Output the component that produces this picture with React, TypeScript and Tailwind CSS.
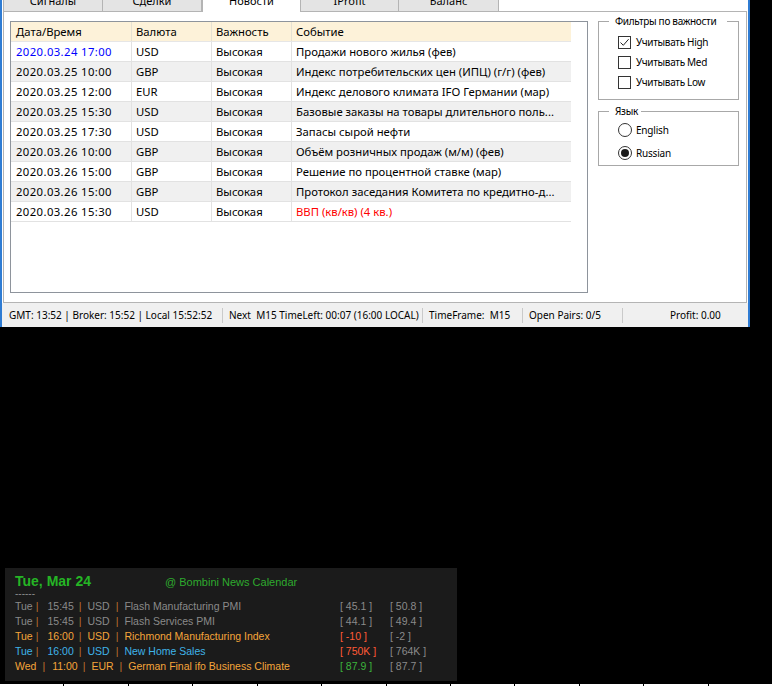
import React from 'react';

type NewsRow = { d: string; c: string; e: string; dc?: string; ec?: string };

const rows: NewsRow[] = [
  { d: '2020.03.24 17:00', c: 'USD', e: 'Продажи нового жилья (фев)', dc: 'text-[#0000ff]' },
  { d: '2020.03.25 10:00', c: 'GBP', e: 'Индекс потребительских цен (ИПЦ) (г/г) (фев)' },
  { d: '2020.03.25 12:00', c: 'EUR', e: 'Индекс делового климата IFO Германии (мар)' },
  { d: '2020.03.25 15:30', c: 'USD', e: 'Базовые заказы на товары длительного поль...' },
  { d: '2020.03.25 17:30', c: 'USD', e: 'Запасы сырой нефти' },
  { d: '2020.03.26 10:00', c: 'GBP', e: 'Объём розничных продаж (м/м) (фев)' },
  { d: '2020.03.26 15:00', c: 'GBP', e: 'Решение по процентной ставке (мар)' },
  { d: '2020.03.26 15:00', c: 'GBP', e: 'Протокол заседания Комитета по кредитно-д...' },
  { d: '2020.03.26 15:30', c: 'USD', e: 'ВВП (кв/кв) (4 кв.)', ec: 'text-[#ff0000]' },
];

type CalRow = {
  day: string; time: string; cur: string; name: string;
  color: string; actual: string; actualColor: string; prev: string;
  p1: string;
};

const calendar: CalRow[] = [
  { day: 'Tue', time: '15:45', cur: 'USD', name: 'Flash Manufacturing PMI', color: 'text-[#8a8a8a]', actual: '[ 45.1 ]', actualColor: 'text-[#8a8a8a]', prev: '[ 50.8 ]', p1: 'ml-[3px] mr-[9px]' },
  { day: 'Tue', time: '15:45', cur: 'USD', name: 'Flash Services PMI', color: 'text-[#8a8a8a]', actual: '[ 44.1 ]', actualColor: 'text-[#8a8a8a]', prev: '[ 49.4 ]', p1: 'ml-[3px] mr-[9px]' },
  { day: 'Tue', time: '16:00', cur: 'USD', name: 'Richmond Manufacturing Index', color: 'text-[#f5a53a]', actual: '[ -10 ]', actualColor: 'text-[#ff5a36]', prev: '[ -2 ]', p1: 'ml-[3px] mr-[9px]' },
  { day: 'Tue', time: '16:00', cur: 'USD', name: 'New Home Sales', color: 'text-[#3fb3e8]', actual: '[ 750K ]', actualColor: 'text-[#ff5a36]', prev: '[ 764K ]', p1: 'ml-[3px] mr-[9px]' },
  { day: 'Wed', time: '11:00', cur: 'EUR', name: 'German Final ifo Business Climate', color: 'text-[#f5a53a]', actual: '[ 87.9 ]', actualColor: 'text-[#3cb43c]', prev: '[ 87.7 ]', p1: 'ml-[6px] mr-[7px]' },
];

const tabs = [
  { label: 'Сигналы', w: 'w-[100px]' },
  { label: 'Сделки', w: 'w-[99px]' },
  { label: 'Новости', w: 'w-[99px]', active: true },
  { label: 'IProfit', w: 'w-[98px]' },
  { label: 'Баланс', w: 'w-[100px]' },
];

const Pipe: React.FC<{ cls: string }> = ({ cls }) => (
  <span className={`text-[#c0712e] ${cls}`}>|</span>
);

const CheckBox: React.FC<{ checked?: boolean; label: string }> = ({ checked, label }) => (
  <div className="flex items-center h-[13px]">
    <div className="w-[13px] h-[13px] border border-[#333333] bg-white flex items-center justify-center">
      {checked && (
        <svg width="11" height="11" viewBox="0 0 11 11">
          <path d="M1.5 5.5 L4.3 8.3 L9.6 2.2" fill="none" stroke="#222" strokeWidth="1" />
        </svg>
      )}
    </div>
    <span className="ml-[5px] text-[10px] tracking-[-0.3px] leading-[13px] whitespace-nowrap">{label}</span>
  </div>
);

const Radio: React.FC<{ checked?: boolean; label: string }> = ({ checked, label }) => (
  <div className="flex items-center h-[14px]">
    <div className="w-[14px] h-[14px] rounded-full border border-[#333333] bg-white flex items-center justify-center">
      {checked && <div className="w-[8px] h-[8px] rounded-full bg-[#1a1a1a]" />}
    </div>
    <span className="ml-[4px] text-[10px] tracking-[-0.2px] leading-[14px] whitespace-nowrap">{label}</span>
  </div>
);

export default function App() {
  return (
    <div className="w-[772px] h-[686px] bg-black flex flex-col overflow-hidden font-['Noto_Sans',sans-serif]">
      {/* window */}
      <div className="w-[750px] h-[327px] bg-white border-l-2 border-r-2 border-[#2f7cd3] flex flex-col text-black">
        {/* tab strip, cut off at top */}
        <div className="h-[11px] flex pl-[1px]">
          {tabs.map((t) =>
            t.active ? (
              <div key={t.label} className={`${t.w} h-[12px] bg-white border-l border-r border-[#b4b4b4] overflow-hidden flex justify-center relative z-10`}>
                <span className="text-[11px] leading-[15px] -mt-[7px]">{t.label}</span>
              </div>
            ) : (
              <div key={t.label} className={`${t.w} h-[11px] bg-[#e4e4e4] border-r border-[#b4b4b4] first:border-l overflow-hidden flex justify-center`}>
                <span className="text-[11px] leading-[15px] -mt-[7px]">{t.label}</span>
              </div>
            )
          )}
        </div>

        {/* tab page */}
        <div className="mx-[1px] h-[292px] border border-[#b4b4b4] flex pl-[6px] pt-[9px]">
          {/* list view */}
          <div className="w-[578px] h-[272px] border border-[#8e949c] text-[11.3px]">
            <div className="w-[560px] h-[20px] flex bg-[#fdf2d9] border-b border-[#e6e6e6]">
              <div className="w-[121px] border-r border-[#e6e1d2] pl-[5px] leading-[19px]">Дата/Время</div>
              <div className="w-[80px] border-r border-[#e6e1d2] pl-[4px] leading-[19px]">Валюта</div>
              <div className="w-[80px] border-r border-[#e6e1d2] pl-[4px] leading-[19px]">Важность</div>
              <div className="w-[279px] pl-[4px] leading-[19px]">Событие</div>
            </div>
            {rows.map((r, i) => (
              <div
                key={i}
                className={`w-[560px] h-[20px] flex border-b border-[#e2e2e2] ${i % 2 === 1 ? 'bg-[#f0f0f0]' : 'bg-white'}`}
              >
                <div className={`w-[121px] border-r border-[#e2e2e2] pl-[5px] leading-[19px] tracking-[0.4px] ${r.dc ?? ''}`}>{r.d}</div>
                <div className="w-[80px] border-r border-[#e2e2e2] pl-[4px] leading-[19px]">{r.c}</div>
                <div className="w-[80px] border-r border-[#e2e2e2] pl-[4px] leading-[19px]">Высокая</div>
                <div className={`w-[279px] pl-[4px] leading-[19px] whitespace-nowrap overflow-hidden ${r.ec ?? ''}`}>{r.e}</div>
              </div>
            ))}
          </div>

          {/* right side group boxes */}
          <div className="ml-[10px] w-[141px] flex flex-col -mt-[6px]">
            <fieldset className="border border-[#a8a8a8] h-[85px]">
              <legend className="ml-[10px] pl-[6px] pr-[11px] text-[10px] tracking-[-0.3px] leading-[12px] whitespace-nowrap">Фильтры по важности</legend>
              <div className="flex flex-col gap-[7px] mt-[9px] pl-[19px]">
                <CheckBox checked label="Учитывать High" />
                <CheckBox label="Учитывать Med" />
                <CheckBox label="Учитывать Low" />
              </div>
            </fieldset>
            <fieldset className="mt-[5px] border border-[#a8a8a8] h-[61px]">
              <legend className="ml-[10px] pl-[6px] pr-[3px] text-[10px] tracking-[-0.3px] leading-[12px] whitespace-nowrap">Язык</legend>
              <div className="flex flex-col gap-[9px] mt-[6px] pl-[19px]">
                <Radio label="English" />
                <Radio checked label="Russian" />
              </div>
            </fieldset>
          </div>
        </div>

        {/* status bar */}
        <div className="flex-1 bg-[#f0f0f0] flex items-center text-[10px] whitespace-nowrap">
          <div className="w-[220px] pl-[7px]">GMT: 13:52 | Broker: 15:52 | Local 15:52:52</div>
          <div className="w-px h-[15px] bg-[#cacaca]" />
          <div className="w-[199px] pl-[6px]">Next&nbsp; M15 TimeLeft: 00:07 (16:00 LOCAL)</div>
          <div className="w-px h-[15px] bg-[#cacaca]" />
          <div className="w-[99px] pl-[6px]">TimeFrame:&nbsp; M15</div>
          <div className="w-px h-[15px] bg-[#cacaca]" />
          <div className="w-[99px] pl-[6px]">Open Pairs: 0/5</div>
          <div className="w-px h-[15px] bg-[#cacaca]" />
          <div className="flex-1 pl-[47px]">Profit: 0.00</div>
        </div>
      </div>

      {/* news calendar overlay panel */}
      <div className="mt-[241px] ml-[5px] w-[452px] h-[113px] bg-[#1b1b1b] pl-[10px] pt-[5px] font-['Liberation_Sans',Arial,sans-serif]">
        <div className="flex items-baseline h-[16px]">
          <span className="w-[150px] text-[14px] leading-[16px] font-bold text-[#25b525]">Tue, Mar 24</span>
          <span className="text-[11px] leading-[16px] text-[#2eaa2e]">@ Bombini News Calendar</span>
        </div>
        <div className="h-[10px] pt-[1px] text-[10px] leading-[8px] text-[#8a8a8a]">------</div>
        {calendar.map((c, i) => (
          <div key={i} className="flex h-[15px] text-[10.5px] leading-[15px] whitespace-nowrap">
            <div className={`w-[325px] ${c.color}`}>
              <span>{c.day}</span>
              <Pipe cls={c.p1} />
              <span>{c.time}</span>
              <Pipe cls="ml-[5px] mr-[6px]" />
              <span>{c.cur}</span>
              <Pipe cls="ml-[6px] mr-[6px]" />
              <span>{c.name}</span>
            </div>
            <div className={`w-[50px] ${c.actualColor}`}>{c.actual}</div>
            <div className="text-[#8a8a8a]">{c.prev}</div>
          </div>
        ))}
      </div>

      {/* dashed bottom strip */}
      <div className="mt-[3px] h-[2px] flex gap-[1px]">
        {Array.from({ length: 12 }).map((_, i) => (
          <div key={i} className="flex-1 bg-white" />
        ))}
      </div>
    </div>
  );
}
